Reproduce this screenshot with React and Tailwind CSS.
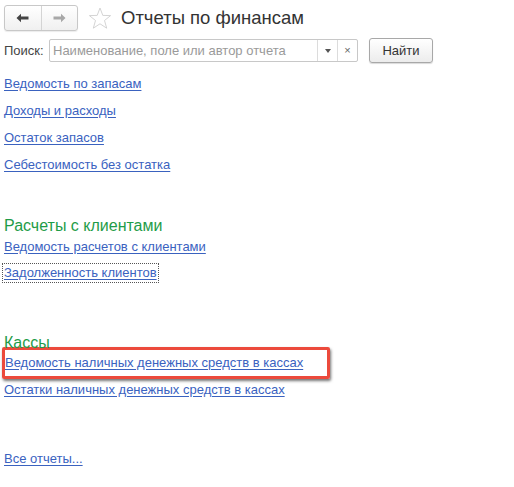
import React from "react";

const link = "text-[#3a62bf] underline decoration-[#3a62bf] underline-offset-[2px] text-[13px] leading-[16px]";

const Links = ({ items }) => (
  <div className="flex flex-col">
    {items.map((t) => (
      <div key={t} className="h-[27px] flex items-center">
        <a href="#" className={link}>{t}</a>
      </div>
    ))}
  </div>
);

export default function App() {
  return (
    <div
      className="w-[514px] h-[487px] bg-white text-[#333] relative overflow-hidden"
      style={{ fontFamily: '"Liberation Sans", Arial, sans-serif' }}
    >
      {/* Header */}
      <div className="flex items-center pl-[4px] pt-[5px] h-[31px]">
        <div className="flex h-[26px] w-[74px] rounded-[3px] border border-[#c8c8c8] bg-gradient-to-b from-white to-[#f0f0f0] shadow-[0_1px_1px_rgba(0,0,0,0.08)]">
          <div className="flex-1 flex items-center justify-center border-r border-[#d4d4d4]">
            <svg width="13" height="10" viewBox="0 0 13 10">
              <path d="M0.5 5 L5 0.8 L5 3.6 L12.5 3.6 L12.5 6.4 L5 6.4 L5 9.2 Z" fill="#444" />
            </svg>
          </div>
          <div className="flex-1 flex items-center justify-center">
            <svg width="13" height="10" viewBox="0 0 13 10">
              <path d="M12.5 5 L8 0.8 L8 3.6 L0.5 3.6 L0.5 6.4 L8 6.4 L8 9.2 Z" fill="#a8a8a8" />
            </svg>
          </div>
        </div>
        <svg className="ml-[10px]" width="24" height="23" viewBox="0 0 24 23">
          <path
            d="M12 1 L14.8 8.4 L22.6 8.6 L16.5 13.5 L18.7 21.2 L12 16.8 L5.3 21.2 L7.5 13.5 L1.4 8.6 L9.2 8.4 Z"
            fill="none"
            stroke="#cfcfcf"
            strokeWidth="0.9"
            strokeLinejoin="round"
          />
        </svg>
        <h1 className="ml-[9px] text-[18.5px] leading-[22px] text-[#333] font-normal">Отчеты по финансам</h1>
      </div>

      {/* Search */}
      <div className="flex items-center pl-[4px] mt-[7px] h-[25px]">
        <span className="text-[13px] text-[#444] w-[45px]">Поиск:</span>
        <div className="flex h-[23px] w-[309px] border border-[#c8c8c8] rounded-[2px] bg-white">
          <div className="flex-1 flex items-center pl-[3px] text-[13px] text-[#9a9a9a]">
            Наименование, поле или автор отчета
          </div>
          <div className="w-[20px] flex items-center justify-center border-l border-[#dcdcdc]">
            <svg width="6" height="4" viewBox="0 0 6 4"><path d="M0 0 L6 0 L3 4 Z" fill="#555" /></svg>
          </div>
          <div className="w-[20px] flex items-center justify-center border-l border-[#dcdcdc] text-[11px] text-[#666]">
            ×
          </div>
        </div>
        <button className="ml-[11px] h-[25px] w-[64px] rounded-[3px] border border-[#a8a8a8] bg-gradient-to-b from-white to-[#ececec] text-[13px] text-[#333] shadow-[0_1px_1px_rgba(0,0,0,0.15)]">
          Найти
        </button>
      </div>

      {/* Section 1 */}
      <div className="pl-[4px] mt-[7px]">
        <Links items={["Ведомость по запасам", "Доходы и расходы", "Остаток запасов", "Себестоимость без остатка"]} />
      </div>

      {/* Section 2 */}
      <div className="pl-[4px] mt-[38px]">
        <div className="text-[16px] leading-[20px] text-[#1f9c48]">Расчеты с клиентами</div>
        <div className="h-[22px] flex items-center">
          <a href="#" className={link}>Ведомость расчетов с клиентами</a>
        </div>
        <div className="h-[29px] flex items-center">
          <a href="#" className={link + " outline outline-1 outline-dotted outline-[#555] outline-offset-[1px]"}>
            Задолженность клиентов
          </a>
        </div>
      </div>

      {/* Section 3 */}
      <div className="pl-[4px] mt-[46px]">
        <div className="text-[16px] leading-[20px] text-[#1f9c48]">Кассы</div>
        <div className="-ml-[2px] mt-[-6px] w-[328px] h-[32px] flex items-center pl-0 border-[3px] border-[#ec4a3c] rounded-[2px] shadow-[1px_2px_3px_rgba(0,0,0,0.55)]">
          <a href="#" className={link}>Ведомость наличных денежных средств в кассах</a>
        </div>
        <div className="h-[22px] flex items-center">
          <a href="#" className={link}>Остатки наличных денежных средств в кассах</a>
        </div>
      </div>

      {/* All reports */}
      <div className="pl-[4px] mt-[45px]">
        <a href="#" className={link}>Все отчеты...</a>
      </div>
    </div>
  );
}
